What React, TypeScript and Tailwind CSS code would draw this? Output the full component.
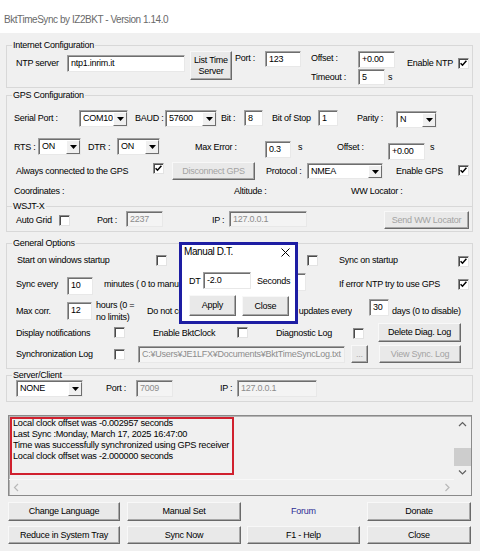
import React from "react";

type Kids = { className?: string; children?: React.ReactNode };

function Txt({ className = "", children }: Kids) {
  return <div className={`shrink-0 whitespace-nowrap leading-[12px] ${className}`}>{children}</div>;
}

function Field({ className = "", value, disabled }: { className?: string; value?: string; disabled?: boolean }) {
  return (
    <div
      className={`shrink-0 overflow-hidden whitespace-nowrap border border-[#a0a0a0] border-r-[#e8e8e8] border-b-[#e8e8e8] shadow-[inset_1px_1px_0_#6e6e6e] pl-[3px] pt-[1px] leading-[12px] ${
        disabled ? "bg-[#f4f4f4] text-[#8c8c8c]" : "bg-white text-black"
      } ${className}`}
    >
      {value}
    </div>
  );
}

function Combo({ className = "", value }: { className?: string; value: string }) {
  return (
    <div className={`shrink-0 flex border border-[#a0a0a0] border-r-[#e8e8e8] border-b-[#e8e8e8] shadow-[inset_1px_1px_0_#6e6e6e] bg-white ${className}`}>
      <div className="flex-1 overflow-hidden whitespace-nowrap pl-[3px] pt-[1px] leading-[12px]">{value}</div>
      <div className="w-[14px] mt-px flex items-center justify-center bg-[#f0f0f0] border border-t-white border-l-white border-r-[#6e6e6e] border-b-[#6e6e6e]">
        <svg width="7" height="4" viewBox="0 0 7 4">
          <path d="M0 0h7L3.5 4z" fill="#000" />
        </svg>
      </div>
    </div>
  );
}

function Check({ className = "", checked }: { className?: string; checked?: boolean }) {
  return (
    <div
      className={`shrink-0 w-[11px] h-[11px] flex items-center justify-center bg-white border border-[#8a8a8a] border-r-[#e3e3e3] border-b-[#e3e3e3] shadow-[inset_1px_1px_0_#4a4a4a] ${className}`}
    >
      {checked && (
        <svg width="7" height="7" viewBox="0 0 7 7">
          <path d="M0.6 3.2l1.9 2 3.9-4.4" stroke="#000" strokeWidth="1.5" fill="none" />
        </svg>
      )}
    </div>
  );
}

function Btn({ className = "", children, disabled }: Kids & { disabled?: boolean }) {
  return (
    <div
      className={`shrink-0 flex items-center justify-center text-center leading-[11px] bg-[#e9e9e9] border border-t-[#f8f8f8] border-l-[#f8f8f8] border-r-[#6a6a6a] border-b-[#6a6a6a] shadow-[inset_-1px_-1px_0_#a8a8a8] ${
        disabled ? "text-[#a3a3a3]" : "text-black"
      } ${className}`}
    >
      {children}
    </div>
  );
}

function Group({ title, className = "", children }: Kids & { title: string }) {
  return (
    <fieldset className={`ml-[6px] w-[467px] border border-[#d8d8d8] ${className}`}>
      <legend className="ml-[5px] px-px leading-[10px] whitespace-nowrap">{title}</legend>
      {children}
    </fieldset>
  );
}

function Chevron({ dir, color }: { dir: "up" | "down" | "left" | "right"; color: string }) {
  const d = {
    up: "M1 5L4.5 1.5L8 5",
    down: "M1 1.5L4.5 5L8 1.5",
    left: "M5 1L1.5 4.5L5 8",
    right: "M1.5 1L5 4.5L1.5 8",
  }[dir];
  const horiz = dir === "left" || dir === "right";
  return (
    <svg width={horiz ? 7 : 9} height={horiz ? 9 : 7} viewBox={horiz ? "0 0 7 9" : "0 0 9 7"}>
      <path d={d} stroke={color} strokeWidth="1.2" fill="none" />
    </svg>
  );
}

export default function App() {
  return (
    <div className="relative w-[480px] h-[551px] overflow-hidden bg-[#f0f0f0] text-[9px] tracking-[-0.25px] text-black [font-family:'Liberation_Sans',Arial,sans-serif]">
      {/* window caption */}
      <div className="h-[33px] bg-white pl-[4px] pt-[13px] text-[10px] tracking-[-0.45px] leading-[14px] text-[#6a6a6a]">
        BktTimeSync by IZ2BKT - Version 1.14.0
      </div>

      {/* Internet configuration */}
      <Group title="Internet Configuration" className="mt-[7px] h-[48px]">
        <div className="flex items-start mt-px h-[34px]">
          <Txt className="ml-[9px] w-[51px] mt-[6px]">NTP server</Txt>
          <Field className="w-[118px] h-[17px] mt-[4px]" value="ntp1.inrim.it" />
          <Btn className="ml-[5px] w-[42px] h-[29px]">
            List Time
            <br />
            Server
          </Btn>
          <Txt className="ml-[3px] w-[30px] mt-px">Port :</Txt>
          <Field className="w-[36px] h-[16px]" value="123" />
          <div className="ml-[10px] w-[84px] shrink-0">
            <div className="flex items-start">
              <Txt className="w-[47px] mt-px">Offset :</Txt>
              <Field className="w-[37px] h-[17px]" value="+0.00" />
            </div>
            <div className="flex items-start mt-px">
              <Txt className="w-[47px] mt-[2px]">Timeout :</Txt>
              <Field className="w-[27px] h-[16px]" value="5" />
              <Txt className="ml-[3px] mt-[2px]">s</Txt>
            </div>
          </div>
          <Txt className="ml-[12px] w-[51px] mt-[6px]">Enable NTP</Txt>
          <Check className="mt-[7px]" checked />
        </div>
      </Group>

      {/* GPS configuration with WSJT-X section */}
      <Group title="GPS Configuration" className="mt-[2px] h-[142px]">
        <div className="flex items-start mt-[10px] h-[17px]">
          <Txt className="ml-[7px] w-[65px] mt-[2px]">Serial Port :</Txt>
          <Combo className="w-[49px] h-[17px]" value="COM10" />
          <Txt className="ml-[7px] w-[30px] mt-[2px]">BAUD :</Txt>
          <Combo className="w-[52px] h-[17px]" value="57600" />
          <Txt className="ml-[4px] w-[23px] mt-[2px]">Bit :</Txt>
          <Field className="w-[19px] h-[16px]" value="8" />
          <Txt className="ml-[9px] w-[46px] mt-[2px]">Bit of Stop</Txt>
          <Field className="w-[20px] h-[16px]" value="1" />
          <Txt className="ml-[19px] w-[39px] mt-[2px]">Parity :</Txt>
          <Combo className="w-[41px] h-[17px] mt-px" value="N" />
        </div>
        <div className="flex items-start mt-[11px] h-[21px]">
          <Txt className="ml-[7px] w-[24px] mt-[3px]">RTS :</Txt>
          <Combo className="w-[43px] h-[17px]" value="ON" />
          <Txt className="ml-[7px] w-[29px] mt-[3px]">DTR :</Txt>
          <Combo className="w-[43px] h-[17px]" value="ON" />
          <Txt className="ml-[35px] w-[70px] mt-[3px]">Max Error :</Txt>
          <Field className="w-[26px] h-[17px] mt-[3px]" value="0.3" />
          <Txt className="ml-[7px] w-[39px] mt-[3px]">s</Txt>
          <Txt className="w-[51px] mt-[3px]">Offset :</Txt>
          <Field className="w-[37px] h-[17px] mt-[5px]" value="+0.00" />
          <Txt className="ml-[5px] mt-[3px]">s</Txt>
        </div>
        <div className="flex items-start mt-[3px] h-[18px]">
          <Txt className="ml-[9px] w-[137px] mt-[3px]">Always connected to the GPS</Txt>
          <Check className="mt-px" checked />
          <Btn className="ml-[8px] w-[83px] h-[18px]" disabled>
            Disconnect GPS
          </Btn>
          <Txt className="ml-[11px] w-[41px] mt-[3px]">Protocol :</Txt>
          <Combo className="w-[76px] h-[16px] mt-px" value="NMEA" />
          <Txt className="ml-[13px] w-[62px] mt-[3px]">Enable GPS</Txt>
          <Check className="mt-[3px]" checked />
        </div>
        <div className="flex items-start mt-[5px] h-[12px]">
          <Txt className="ml-[7px] w-[220px]">Coordinates :</Txt>
          <Txt className="w-[117px]">Altitude :</Txt>
          <Txt>WW Locator :</Txt>
        </div>
        <div className="flex items-center mt-[3px] h-[12px]">
          <div className="w-[5px] h-px bg-[#d8d8d8]" />
          <Txt className="px-px">WSJT-X</Txt>
          <div className="flex-1 h-px bg-[#d8d8d8]" />
        </div>
        <div className="flex items-start -mt-px h-[18px]">
          <Txt className="ml-[9px] w-[43px] mt-[3px]">Auto Grid</Txt>
          <Check className="mt-[4px]" />
          <Txt className="ml-[27px] w-[29px] mt-[3px]">Port :</Txt>
          <Field className="w-[37px] h-[16px]" value="2237" disabled />
          <Txt className="ml-[49px] w-[17px] mt-[3px]">IP :</Txt>
          <Field className="w-[78px] h-[16px]" value="127.0.0.1" disabled />
          <Btn className="ml-[77px] w-[85px] h-[18px]" disabled>
            Send WW Locator
          </Btn>
        </div>
      </Group>

      {/* General options (labels that run under the dialog stop at its edge) */}
      <Group title="General Options" className="mt-[6px] h-[131px]">
        <div className="flex items-start mt-[6px] h-[12px]">
          <Txt className="ml-[10px] w-[139px]">Start on windows startup</Txt>
          <Check className="mt-px" />
          <Check className="ml-[140px] mt-px" />
          <Txt className="ml-[21px] w-[119px]">Sync on startup</Txt>
          <Check className="mt-[2px]" checked />
        </div>
        <div className="flex items-start mt-[11px] h-[18px]">
          <Txt className="ml-[9px] w-[51px] mt-px">Sync every</Txt>
          <Field className="w-[26px] h-[18px]" value="10" />
          <Txt className="ml-[11px] w-[75px] mt-px overflow-hidden">minutes ( 0 to manual sync )</Txt>
          <Field className="ml-[91px] w-[36px] h-[18px] -mt-[4px]" value="" />
          <Txt className="ml-[33px] w-[119px] mt-px">If error NTP try to use GPS</Txt>
          <Check className="mt-[2px]" checked />
        </div>
        <div className="flex items-start mt-[4px] h-[21px]">
          <Txt className="ml-[9px] w-[51px] mt-[6px]">Max corr.</Txt>
          <Field className="w-[25px] h-[18px] mt-[3px]" value="12" />
          <Txt className="ml-[4px] w-[51px] leading-[11px]">
            hours (0 =
            <br />
            no limits)
          </Txt>
          <Txt className="w-[32px] mt-[6px] overflow-hidden">Do not correct</Txt>
          <div className="ml-[119px] w-[54px] mt-[6px] shrink-0 flex justify-end overflow-hidden whitespace-nowrap leading-[12px]">
            <span className="shrink-0">Check for updates every</span>
          </div>
          <Field className="ml-[17px] w-[20px] h-[17px]" value="30" />
          <Txt className="ml-[3px] mt-[6px]">days (0 to disable)</Txt>
        </div>
        <div className="flex items-start mt-[3px] h-[19px]">
          <Txt className="ml-[9px] w-[98px] mt-[4px]">Display notifications</Txt>
          <Check className="mt-[4px]" />
          <Txt className="ml-[28px] w-[84px] mt-[4px]">Enable BktClock</Txt>
          <Check className="mt-[4px]" />
          <Txt className="ml-[28px] w-[77px] mt-[4px]">Diagnostic Log</Txt>
          <Check className="mt-[5px]" />
          <Btn className="ml-[14px] w-[83px] h-[19px]">Delete Diag. Log</Btn>
        </div>
        <div className="flex items-start mt-[3px] h-[18px]">
          <Txt className="ml-[9px] w-[98px] mt-[3px]">Synchronization Log</Txt>
          <Check className="mt-[4px]" />
          <Field
            className="ml-[13px] w-[207px] h-[17px] mt-px"
            value="C:¥Users¥JE1LFX¥Documents¥BktTimeSyncLog.txt"
            disabled
          />
          <Btn className="ml-[6px] w-[17px] h-[18px]" disabled>
            ...
          </Btn>
          <Btn className="ml-[11px] w-[82px] h-[18px]" disabled>
            View Sync. Log
          </Btn>
        </div>
      </Group>

      {/* Server / client */}
      <Group title="Server/Client" className="mt-px h-[32px]">
        <div className="flex items-start h-[17px]">
          <Combo className="ml-[9px] w-[67px] h-[17px]" value="NONE" />
          <Txt className="ml-[23px] w-[30px] mt-[2px]">Port :</Txt>
          <Field className="w-[37px] h-[17px]" value="7009" disabled />
          <Txt className="ml-[47px] w-[17px] mt-[2px]">IP :</Txt>
          <Field className="w-[80px] h-[17px]" value="127.0.0.1" disabled />
        </div>
      </Group>

      {/* log output */}
      <div className="relative mt-[13px] ml-[8px] w-[464px] h-[81px] flex flex-col border border-[#8a8a8a] shadow-[inset_1px_1px_0_#b4b4b4] bg-[#f0f0f0]">
        <div className="flex h-[63px]">
          <div className="flex-1 pl-[4px] pt-[2px] text-[9.2px] leading-[11px] whitespace-nowrap overflow-hidden">
            <div>Local clock offset was -0.002957 seconds</div>
            <div>Last Sync :Monday, March 17, 2025 16:47:00</div>
            <div>Time was successfully synchronized using GPS receiver</div>
            <div>Local clock offset was -2.000000 seconds</div>
          </div>
          <div className="w-[17px] flex flex-col">
            <div className="h-[17px] flex items-center justify-center">
              <Chevron dir="up" color="#606060" />
            </div>
            <div className="h-[15px]" />
            <div className="h-[18px] bg-[#cdcdcd]" />
            <div className="h-[13px] flex items-center justify-center">
              <Chevron dir="down" color="#606060" />
            </div>
          </div>
        </div>
        <div className="flex h-[16px]">
          <div className="flex-1 flex items-center justify-between border-t border-[#f8f8f8]">
            <div className="w-[14px] flex justify-center">
              <Chevron dir="left" color="#b8b8b8" />
            </div>
            <div className="w-[14px] flex justify-center">
              <Chevron dir="right" color="#b8b8b8" />
            </div>
          </div>
          <div className="w-[17px]" />
        </div>
        <div className="absolute left-px top-px w-[224px] h-[58px] border-2 border-[#d0202e]" />
      </div>

      {/* command buttons */}
      <div className="flex items-start mt-[6px] h-[19px]">
        <Btn className="ml-[8px] w-[112px] h-[19px]">Change Language</Btn>
        <Btn className="ml-[7px] w-[114px] h-[19px]">Manual Set</Btn>
        <div className="ml-[6px] w-[113px] h-[19px] shrink-0 flex items-center justify-center text-[#2e2e96]">Forum</div>
        <Btn className="ml-[7px] w-[104px] h-[19px]">Donate</Btn>
      </div>
      <div className="flex items-start mt-[5px] h-[18px]">
        <Btn className="ml-[8px] w-[112px] h-[18px]">Reduce in System Tray</Btn>
        <Btn className="ml-[7px] w-[114px] h-[18px]">Sync Now</Btn>
        <Btn className="ml-[6px] w-[113px] h-[18px]">F1 - Help</Btn>
        <Btn className="ml-[7px] w-[104px] h-[18px]">Close</Btn>
      </div>

      {/* Manual D.T. dialog */}
      <div className="absolute left-[179px] top-[242px] w-[119px] h-[82px] border-[3px] border-[#1d1da3] bg-white">
        <div className="flex items-center justify-between h-[14px] pl-[2px] pr-[5px]">
          <Txt className="text-[10px] tracking-[-0.4px]">Manual D.T.</Txt>
          <svg width="9" height="9" viewBox="0 0 9 9">
            <path d="M0.5 0.5l8 8M8.5 0.5l-8 8" stroke="#000" strokeWidth="1" />
          </svg>
        </div>
        <div className="flex items-start mt-[13px]">
          <Txt className="ml-[7px] w-[14px] mt-[3px]">DT</Txt>
          <Field className="w-[48px] h-[17px]" value="-2.0" />
          <Txt className="ml-[6px] mt-[3px]">Seconds</Txt>
        </div>
        <div className="flex items-start mt-[6px]">
          <Btn className="ml-[7px] w-[47px] h-[21px]">Apply</Btn>
          <Btn className="ml-[6px] w-[47px] h-[20px] mt-px">Close</Btn>
        </div>
      </div>
    </div>
  );
}
